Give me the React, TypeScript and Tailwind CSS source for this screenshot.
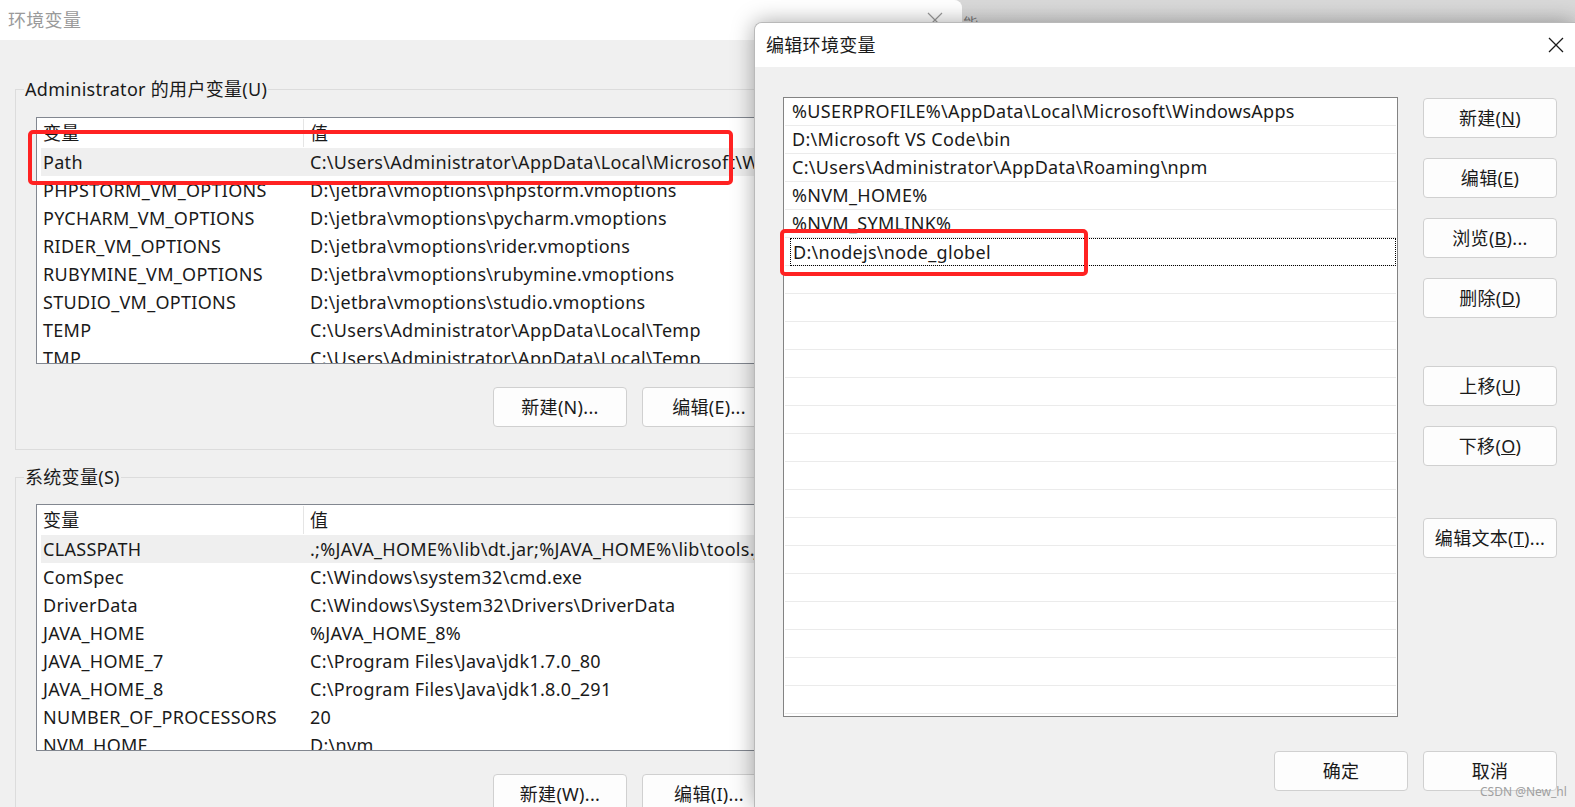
import React from "react";

const font = "font-['Noto_Sans','Noto_Sans_CJK_SC',sans-serif] tracking-[0.3px]";

const userVars: [string, string][] = [
  ["Path", "C:\\Users\\Administrator\\AppData\\Local\\Microsoft\\WindowsApps"],
  ["PHPSTORM_VM_OPTIONS", "D:\\jetbra\\vmoptions\\phpstorm.vmoptions"],
  ["PYCHARM_VM_OPTIONS", "D:\\jetbra\\vmoptions\\pycharm.vmoptions"],
  ["RIDER_VM_OPTIONS", "D:\\jetbra\\vmoptions\\rider.vmoptions"],
  ["RUBYMINE_VM_OPTIONS", "D:\\jetbra\\vmoptions\\rubymine.vmoptions"],
  ["STUDIO_VM_OPTIONS", "D:\\jetbra\\vmoptions\\studio.vmoptions"],
  ["TEMP", "C:\\Users\\Administrator\\AppData\\Local\\Temp"],
  ["TMP", "C:\\Users\\Administrator\\AppData\\Local\\Temp"],
];

const sysVars: [string, string][] = [
  ["CLASSPATH", ".;%JAVA_HOME%\\lib\\dt.jar;%JAVA_HOME%\\lib\\tools.jar"],
  ["ComSpec", "C:\\Windows\\system32\\cmd.exe"],
  ["DriverData", "C:\\Windows\\System32\\Drivers\\DriverData"],
  ["JAVA_HOME", "%JAVA_HOME_8%"],
  ["JAVA_HOME_7", "C:\\Program Files\\Java\\jdk1.7.0_80"],
  ["JAVA_HOME_8", "C:\\Program Files\\Java\\jdk1.8.0_291"],
  ["NUMBER_OF_PROCESSORS", "20"],
  ["NVM_HOME", "D:\\nvm"],
];

const paths = [
  "%USERPROFILE%\\AppData\\Local\\Microsoft\\WindowsApps",
  "D:\\Microsoft VS Code\\bin",
  "C:\\Users\\Administrator\\AppData\\Roaming\\npm",
  "%NVM_HOME%",
  "%NVM_SYMLINK%",
  "D:\\nodejs\\node_globel",
];

function Btn({ children, className = "" }: { children: React.ReactNode; className?: string }) {
  return (
    <div
      className={`flex h-[40px] w-[134px] shrink-0 items-center justify-center rounded-[4px] border border-[#d0d0d0] bg-[#fdfdfd] text-[18px] text-[#1a1a1a] ${className}`}
    >
      {children}
    </div>
  );
}

function VarList({ rows, height }: { rows: [string, string][]; height: string }) {
  return (
    <div className={`${height} overflow-hidden border border-[#828790] bg-white`}>
      <div className="flex h-[30px] items-center pl-[4px]">
        <div className="w-[262px] pl-[2px]">变量</div>
        <div className="h-[28px] w-px bg-[#e5e5e5]" />
        <div className="pl-[6px]">值</div>
      </div>
      {rows.map(([k, v], i) => (
        <div
          key={k}
          className={`mx-[4px] grid h-[28px] grid-cols-[267px_1fr] items-center whitespace-nowrap ${i === 0 ? "bg-[#efefef]" : ""}`}
        >
          <div className="pl-[2px]">{k}</div>
          <div className="pl-[2px]">{v}</div>
        </div>
      ))}
    </div>
  );
}

function Group({ label, children, className = "" }: { label: string; children: React.ReactNode; className?: string }) {
  return (
    <fieldset className={`ml-[15px] w-[931px] border border-[#dcdcdc] px-[20px] ${className}`}>
      <legend className="ml-[-12px] px-[1px] text-[18px] leading-[24px]">{label}</legend>
      {children}
    </fieldset>
  );
}

function BackWindow() {
  return (
    <div className="absolute left-0 top-0 h-[807px] w-[962px] overflow-hidden rounded-tr-[8px] bg-[#f0f0f0] text-[18px] text-[#1a1a1a]">
      <div className="flex h-[40px] items-center justify-between bg-white pl-[8px] pr-[18px]">
        <span className="text-[18px] text-[#9a9a9a]">环境变量</span>
        <svg width="16" height="16" viewBox="0 0 16 16" className="mr-[1px]">
          <path d="M1 1L15 15M15 1L1 15" stroke="#9a9a9a" strokeWidth="1.2" />
        </svg>
      </div>
      <Group label="Administrator 的用户变量(U)" className="mt-[37px] pb-[22px]">
        <div className="mt-[16px]">
          <VarList rows={userVars} height="h-[247px]" />
        </div>
        <div className="mt-[23px] flex justify-end gap-[15px]">
          <Btn>新建(N)...</Btn>
          <Btn>编辑(E)...</Btn>
          <Btn>删除(D)</Btn>
        </div>
      </Group>
      <Group label="系统变量(S)" className="mt-[15px] h-[400px]">
        <div className="mt-[15px]">
          <VarList rows={sysVars} height="h-[247px]" />
        </div>
        <div className="mt-[23px] flex justify-end gap-[15px]">
          <Btn>新建(W)...</Btn>
          <Btn>编辑(I)...</Btn>
          <Btn>删除(L)</Btn>
        </div>
      </Group>
    </div>
  );
}

function EditDialog() {
  const rows = Array.from({ length: 22 }, (_, i) => paths[i] ?? "");
  return (
    <div className="absolute left-[754px] top-[22px] flex h-[785px] w-[821px] flex-col overflow-hidden rounded-tl-[8px] border-l border-t border-[#b9b9b9] bg-[#f0f0f0] text-[18px] text-[#1a1a1a] shadow-[0_0_22px_rgba(0,0,0,0.35)]">
      <div className="flex h-[44px] shrink-0 items-center justify-between bg-white pl-[11px] pr-[11px]">
        <span>编辑环境变量</span>
        <svg width="16" height="16" viewBox="0 0 16 16">
          <path d="M1 1L15 15M15 1L1 15" stroke="#1a1a1a" strokeWidth="1.3" />
        </svg>
      </div>
      <div className="flex pl-[28px] pt-[30px]">
        <div className="h-[620px] w-[615px] overflow-hidden border border-[#838383] bg-white">
          {rows.map((p, i) => (
            <div key={i} className="mx-px h-[28px] border-b border-[#ebebeb] whitespace-nowrap">
              {i === 5 ? (
                <div className="ml-[5px] flex h-[28px] items-center border border-dotted border-black pl-[2px]">{p}</div>
              ) : (
                <div className="flex h-[27px] items-center pl-[7px]">{p}</div>
              )}
            </div>
          ))}
        </div>
        <div className="ml-[25px] flex flex-col pt-px">
          <Btn>新建(<u>N</u>)</Btn>
          <Btn className="mt-[20px]">编辑(<u>E</u>)</Btn>
          <Btn className="mt-[20px]">浏览(<u>B</u>)...</Btn>
          <Btn className="mt-[20px]">删除(<u>D</u>)</Btn>
          <Btn className="mt-[48px]">上移(<u>U</u>)</Btn>
          <Btn className="mt-[20px]">下移(<u>O</u>)</Btn>
          <Btn className="mt-[52px]">编辑文本(<u>T</u>)...</Btn>
        </div>
      </div>
      <div className="flex justify-end gap-[15px] pr-[18px] pt-[34px]">
        <Btn className="border-[#0067c0]">确定</Btn>
        <Btn>取消</Btn>
      </div>
    </div>
  );
}

export default function App() {
  return (
    <div className={`relative h-[807px] w-[1575px] overflow-hidden bg-gradient-to-b from-[#d9d9d9] to-[#ececec] ${font}`}>
      <span className="absolute left-[963px] top-[12px] text-[15px] text-[#777]">能</span>
      <BackWindow />
      <EditDialog />
      <div className="absolute left-[28px] top-[130px] h-[55px] w-[705px] rounded-[5px] border-[4px] border-[#ff2222]" />
      <div className="absolute left-[780px] top-[229px] h-[47px] w-[308px] rounded-[5px] border-[4px] border-[#ff2222]" />
      <span className="absolute left-[1480px] top-[783px] text-[12px] tracking-normal text-[#a0a0a0]">CSDN @New_hl</span>
    </div>
  );
}
